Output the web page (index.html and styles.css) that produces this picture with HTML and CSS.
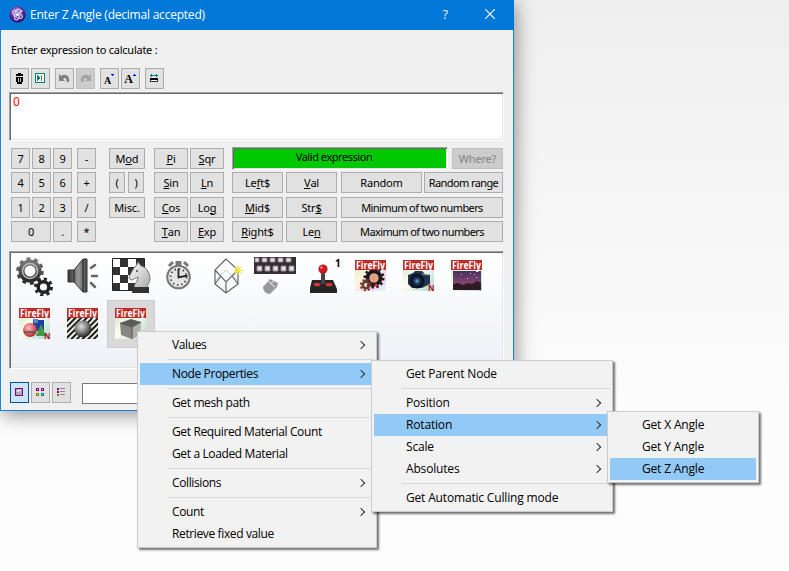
FILE: index.html
```html
<!DOCTYPE html>
<html lang="en">
<head>
<meta charset="utf-8">
<title>Enter Z Angle</title>
<link rel="stylesheet" href="styles.css">
</head>
<body>
<svg class="defs" width="0" height="0" aria-hidden="true">
  <defs>
    <linearGradient id="dark" x1="0" y1="0" x2="0" y2="1"><stop offset="0" stop-color="#777"/><stop offset="1" stop-color="#2b2b2b"/></linearGradient>
    <linearGradient id="cone" x1="0" y1="0" x2="1" y2="0"><stop offset="0" stop-color="#333"/><stop offset=".55" stop-color="#999"/><stop offset="1" stop-color="#444"/></linearGradient>
    <linearGradient id="horse" x1="0" y1="0" x2="1" y2="1"><stop offset="0" stop-color="#fff"/><stop offset="1" stop-color="#aaa"/></linearGradient>
    <linearGradient id="pastel" x1="0" y1="0" x2="1" y2="1"><stop offset="0" stop-color="#c9dfc5"/><stop offset=".45" stop-color="#fffef0"/><stop offset="1" stop-color="#aed8cf"/></linearGradient>
    <linearGradient id="rainbow" x1="0" y1="0" x2="1" y2="1"><stop offset="0" stop-color="#c5f3a8"/><stop offset=".4" stop-color="#fff3e2"/><stop offset=".75" stop-color="#f4d2f4"/><stop offset="1" stop-color="#d5fff0"/></linearGradient>
    <linearGradient id="dusk" x1="0" y1="0" x2="0" y2="1"><stop offset="0" stop-color="#46305e"/><stop offset="1" stop-color="#a5507a"/></linearGradient>
    <radialGradient id="ball" cx=".4" cy=".35" r=".65"><stop offset="0" stop-color="#ddd"/><stop offset=".5" stop-color="#888"/><stop offset="1" stop-color="#222"/></radialGradient>
    <radialGradient id="red" cx=".4" cy=".35" r=".7"><stop offset="0" stop-color="#ffc0c0"/><stop offset="1" stop-color="#b01828"/></radialGradient>
    <radialGradient id="lens"><stop offset="0" stop-color="#7fa6cf"/><stop offset=".5" stop-color="#1c3a66"/><stop offset="1" stop-color="#0a1222"/></radialGradient>
    <radialGradient id="orb" cx=".4" cy=".3" r=".75"><stop offset="0" stop-color="#a98be0"/><stop offset=".5" stop-color="#5a2f9e"/><stop offset="1" stop-color="#24105c"/></radialGradient>
    <pattern id="stripes" width="4" height="4" patternUnits="userSpaceOnUse" patternTransform="rotate(45)"><rect width="4" height="4" fill="#eef3e6"/><rect width="2" height="4" fill="#1b1b1b"/></pattern>
    <g id="banner">
      <rect width="31" height="10" fill="#c22a26"/>
      <text class="brand" x="1" y="9" textLength="29" lengthAdjust="spacingAndGlyphs">FireFly</text>
    </g>
  </defs>
</svg>

<main class="window">
  <header class="titlebar">
    <svg class="app-icon" viewBox="0 0 17 17"><circle cx="8.500" cy="8.500" r="8.200" fill="url(#orb)"/><g fill="none" stroke="#d9cdf5" stroke-width="1.200"><ellipse cx="8.500" cy="8.500" rx="5.500" ry="2.600" transform="rotate(35 8.500 8.500)"/><ellipse cx="8.500" cy="8.500" rx="5.500" ry="2.600" transform="rotate(105 8.500 8.500)"/></g><circle cx="8.500" cy="8.500" r="1.500" fill="#fff"/><circle cx="12.500" cy="5" r="1.200" fill="#e8a0d0"/></svg>
    <h1 class="title">Enter Z Angle (decimal accepted)</h1>
    <span class="help">?</span>
    <svg class="close" viewBox="0 0 10 10"><path d="M.3.3l9.400 9.400M9.700.3L.3 9.700" stroke="#fff" stroke-width="1.200"/></svg>
  </header>

  <div class="body">
    <p class="prompt">Enter expression to calculate :</p>
    <div class="toolbar">
      <button class="btn tool"><svg viewBox="0 0 17 19" class="px"><path d="M7 4h3v1h2v2H5V5h2zM5 8h7v5h-1v2H6v-2H5z" fill="#000"/><path d="M7 9h1v4H7zM9 9h1v4H9z" fill="#bbb"/></svg></button>
      <button class="btn tool"><svg viewBox="0 0 17 19" class="px"><path d="M3 4h10v10H3z" fill="#008080"/><path d="M4 5h8v8H4z" fill="#fff"/><path d="M5 6h1v1h1v1h1v2H7v1H6v1H5z" fill="#008080"/><path d="M9 6h1v6H9z" fill="#808000"/></svg></button>
      <button class="btn tool gap"><svg viewBox="0 0 17 19"><path d="M3 5v7h6l-2-2c2-2 4-1 3.500 3H13c1.500-6-4-9-8-6z" fill="#808080"/></svg></button>
      <button class="btn tool off"><svg viewBox="0 0 17 19"><path d="M14 5v7H8l2-2C8 8 6 9 6.500 13H4C2.500 7 8 4 12 7z" fill="#a3a3a3"/></svg></button>
      <button class="btn tool gap font small">A<svg viewBox="0 0 4 3" class="px mark"><path d="M0 0h3v1H2v1H1V1H0z" fill="#00f"/></svg></button>
      <button class="btn tool font">A<svg viewBox="0 0 4 3" class="px mark"><path d="M1 0h1v1h1v1H0V1h1z" fill="#00f"/></svg></button>
      <button class="btn tool gap"><svg viewBox="0 0 17 19" class="px"><path d="M4 6h8v1H4zM5 5h1v3H5zM10 5h1v3h-1z" fill="#008080"/><path d="M4.500 9.500h7v3h-7z" fill="#fff" stroke="#333"/><path d="M4 9h8v2H4z" fill="#000"/></svg></button>
    </div>

    <div class="editor sunken">0</div>

    <section class="keypad">
      <div class="keys digits">
        <button class="btn">7</button><button class="btn">8</button><button class="btn">9</button><button class="btn op">-</button>
        <button class="btn">4</button><button class="btn">5</button><button class="btn">6</button><button class="btn op">+</button>
        <button class="btn">1</button><button class="btn">2</button><button class="btn">3</button><button class="btn op">/</button>
        <button class="btn zero">0</button><button class="btn">.</button><button class="btn op">*</button>
      </div>
      <div class="keys misc">
        <button class="btn wide">M<u>o</u>d</button>
        <button class="btn">(</button><button class="btn">)</button>
        <button class="btn wide">Misc.</button>
      </div>
      <div class="keys trig">
        <button class="btn"><u>P</u>i</button><button class="btn"><u>S</u>qr</button>
        <button class="btn"><u>S</u>in</button><button class="btn"><u>L</u>n</button>
        <button class="btn"><u>C</u>os</button><button class="btn">Lo<u>g</u></button>
        <button class="btn"><u>T</u>an</button><button class="btn"><u>E</u>xp</button>
      </div>
      <div class="functions">
        <div class="status-row">
          <output class="status sunken">Valid expression</output>
          <button class="btn off where">Where?</button>
        </div>
        <div class="keys text">
          <button class="btn">Le<u>f</u>t$</button><button class="btn second"><u>V</u>al</button><button class="btn third">Random</button><button class="btn fourth long">Random range</button>
          <button class="btn"><u>M</u>id$</button><button class="btn second">Str<u>$</u></button><button class="btn span long">Minimum of two numbers</button>
          <button class="btn"><u>R</u>ight$</button><button class="btn second">Le<u>n</u></button><button class="btn span long">Maximum of two numbers</button>
        </div>
      </div>
    </section>

    <section class="objects sunken">
      <div class="cell"><svg class="big" viewBox="0 0 40 40"><g fill="none" stroke="url(#dark)"><circle cx="15" cy="15" r="8.500" stroke-width="6"/><circle cx="15" cy="15" r="12" stroke-width="3.500" stroke-dasharray="3.770 3.770"/><g stroke="#222"><circle cx="28.500" cy="31" r="5.300" stroke-width="3.500"/><circle cx="28.500" cy="31" r="8" stroke-width="3" stroke-dasharray="3.140 3.140"/></g></g><circle cx="15" cy="15" r="7.500" fill="none" stroke="#bbb" stroke-width="1.500"/></svg></div>
      <div class="cell"><svg class="big" viewBox="0 0 40 40"><path d="M5 14h6L20 3h4v33h-4L11 26H5z" fill="url(#cone)" stroke="#333"/><path d="M11 14v12M20 4v32" stroke="#222" fill="none"/><path d="M28 12l4-3M29 20h5M28 27l4 4" stroke="#666" stroke-width="2.500" stroke-linecap="round"/></svg></div>
      <div class="cell"><svg class="big" viewBox="0 0 40 40"><path d="M1.500 2.500h32v32h-32z" fill="#fff" stroke="#222"/><path d="M9 3h8v8H9zM25 3h8v8h-8zM2 11h7v8H2zM17 11h8v8h-8zM9 19h8v8H9zM2 27h7v7H2zM17 27h8v7h-8z" fill="#333"/><path d="M23 32c0-5 4-6 4-11-3 1-5 3-7 3-2-1-2-3-1-5 2-3 3-7 6-9l2-4 3 4c6 1 9 8 9 13 0 4-3 5-3 9z" fill="url(#horse)" stroke="#777"/><path d="M22 31h16v6H21z" fill="#333"/><circle cx="26" cy="15" r="1" fill="#444"/></svg></div>
      <div class="cell"><svg class="big" viewBox="0 0 40 40"><path d="M10 10l4-4M29 10l-4-4" stroke="#777" stroke-width="3"/><path d="M16.500 5h6v4h-6z" fill="#777"/><circle cx="19.500" cy="21" r="11.300" fill="#e5e5e5" stroke="#777" stroke-width="2"/><circle cx="19.500" cy="21" r="8" fill="none" stroke="#333" stroke-width="1.700" stroke-dasharray="1.400 2.790"/><path d="M19.500 12.500v9l9-2" fill="none" stroke="#222" stroke-width="1.800"/></svg></div>
      <div class="cell"><svg class="big" viewBox="0 0 40 40"><g fill="none"><path d="M19 14L8 25M19 14l12 11" stroke="#ccc"/><path d="M19 3L8 14v14l11 9 12-9V14zM8 14l11 12 12-12M19 26v11M8 28l6-8M31 28l-6-8" stroke="#666" stroke-width="1.200"/><path d="M31 10v9M27 14.500h9M28 11l6 6M34 11l-6 6" stroke="#f2e635" stroke-width="1.200"/></g></svg></div>
      <div class="cell"><svg class="keyboard" viewBox="0 0 44 40"><path d="M1 1h42v17H1z" fill="#332f33"/><path d="M2 2h4v4H2zM9 2h5v4H9zM17 2h5v4h-5zM25 2h5v4h-5zM33 2h5v4h-5zM4 10h5v5H4zM12 10h5v5h-5zM20 10h5v5h-5zM28 10h5v5h-5zM36 10h5v5h-5z" fill="#eadfe2" stroke="#8c8387"/><path d="M10 31l7-8 8 4-1 4-7 7c-4 0-7-3-7-7z" fill="#999"/><path d="M15 25l7 6M18 28l3-4" stroke="#eee" fill="none"/></svg></div>
      <div class="cell"><svg class="big" viewBox="0 0 40 40"><path d="M9 24h21l4 9v4H7v-5z" fill="#252525"/><ellipse cx="14" cy="28.500" rx="3.500" ry="1.800" fill="#d33"/><ellipse cx="26" cy="28.500" rx="3.500" ry="1.800" fill="#d33"/><path d="M18 15h4v13h-4z" fill="#444"/><circle cx="20" cy="13" r="4.600" fill="#c91820"/><circle cx="18.500" cy="11.500" r="1.300" fill="#f88"/><text class="num" x="32" y="10.500">1</text></svg></div>
      <div class="cell"><svg class="fly" viewBox="0 0 32 32"><path d="M0 0h31v31H0z" fill="url(#rainbow)"/><g fill="none" stroke="#21191b"><circle cx="19" cy="18" r="6.500" stroke-width="4"/><circle cx="19" cy="18" r="9.300" stroke-width="2.500" stroke-dasharray="2.430 2.430"/><g stroke="#713a28"><circle cx="11" cy="25" r="3.200" stroke-width="2.500"/><circle cx="11" cy="25" r="5.300" stroke-width="2" stroke-dasharray="2.080 2.080"/></g></g><circle cx="19" cy="18" r="4" fill="#e1a179"/><circle cx="21" cy="25" r="1.500" fill="#e33"/><use href="#banner"/></svg></div>
      <div class="cell"><svg class="fly" viewBox="0 0 32 32"><path d="M0 0h31v31H0z" fill="url(#pastel)"/><path d="M5 15l5-2 2-2h7l3 3 5 1v9l-8 4H9l-4-4z" fill="#26344e"/><circle cx="14" cy="21" r="7.500" fill="#0d1626"/><circle cx="14" cy="21" r="5.500" fill="url(#lens)"/><path d="M19 14l6 1" stroke="#8aa" /><text class="letter" x="25" y="31">N</text><use href="#banner"/></svg></div>
      <div class="cell"><svg class="fly" viewBox="0 0 32 32"><path d="M0 0h31v31H0z" fill="url(#pastel)"/><path d="M2 11h28v19H2z" fill="url(#dusk)"/><path d="M2 24l5-1 5 2 5-2 4 1 5-3 4 2v7H2z" fill="#2e1a25"/><path d="M10 14h1v1h-1zM19 13h1v1h-1zM23 14h1v1h-1zM16 18h1v1h-1zM25 17h1v1h-1z" fill="#dcc"/><use href="#banner"/></svg></div>
      <div class="cell"><svg class="fly" viewBox="0 0 32 32"><path d="M0 0h31v31H0z" fill="url(#pastel)"/><path d="M14 12h11v11H14z" fill="#1f3f9c"/><path d="M14 11h5v4h-4z" fill="#5d84d8"/><path d="M17 28l5-12 5 12z" fill="#3c9c48"/><circle cx="11" cy="22" r="7" fill="url(#red)"/><path d="M5 24h12" stroke="#555" stroke-width="1.500"/><text class="letter" x="25" y="31">N</text><use href="#banner"/></svg></div>
      <div class="cell"><svg class="fly" viewBox="0 0 32 32"><path d="M0 0h31v31H0z" fill="url(#stripes)"/><circle cx="16" cy="21" r="8.500" fill="url(#ball)"/><use href="#banner"/></svg></div>
      <div class="cell selected"><svg class="fly" viewBox="0 0 32 32"><path d="M0 0h31v31H0z" fill="url(#pastel)"/><path d="M5 15l11-4 10 3-9 5z" fill="#5a5c58"/><path d="M5 15l12 4v12L6 27z" fill="#858780"/><path d="M17 19l9-5-1 13-8 4z" fill="#acaea6"/><path d="M17 19v12M5 15l12 4 9-5" stroke="#555" fill="none"/><use href="#banner"/></svg></div>
    </section>

    <footer class="views">
      <button class="btn tool on"><svg viewBox="0 0 17 19" class="px"><path d="M4.500 5.500h7v7h-7z" fill="#aaa" stroke="#800080"/><path d="M6 7h4v1H8v1H6z" fill="#eee"/></svg></button>
      <button class="btn tool"><svg viewBox="0 0 17 19" class="px"><g fill="none"><path d="M4.500 5.500h2v2h-2zM9.500 5.500h2v2h-2z" stroke="#800080"/><path d="M4.500 10.500h2v2h-2z" stroke="#808000"/><path d="M9.500 10.500h2v2h-2z" stroke="#008080"/></g></svg></button>
      <button class="btn tool"><svg viewBox="0 0 17 19" class="px"><path d="M4 5h2v2H4zM4 8h2v2H4z" fill="#800080"/><path d="M4 11h2v2H4z" fill="#808000"/><path d="M7 5h5v1H7zM7 8h5v1H7zM7 11h5v1H7z" fill="#888"/></svg></button>
      <input class="search" type="text" aria-label="Filter">
    </footer>
  </div>
</main>

<nav class="menu root">
  <div class="item more">Values</div>
  <hr>
  <div class="item more active">Node Properties</div>
  <hr>
  <div class="item">Get mesh path</div>
  <hr>
  <div class="item">Get Required Material Count</div>
  <div class="item">Get a Loaded Material</div>
  <hr>
  <div class="item more">Collisions</div>
  <hr>
  <div class="item more">Count</div>
  <div class="item">Retrieve fixed value</div>
</nav>
<nav class="menu node">
  <div class="item">Get Parent Node</div>
  <hr>
  <div class="item more">Position</div>
  <div class="item more active">Rotation</div>
  <div class="item more">Scale</div>
  <div class="item more">Absolutes</div>
  <hr>
  <div class="item">Get Automatic Culling mode</div>
</nav>
<nav class="menu rotation">
  <div class="item">Get X Angle</div>
  <div class="item">Get Y Angle</div>
  <div class="item active">Get Z Angle</div>
</nav>
</body>
</html>
```
FILE: styles.css
```css
* { box-sizing: border-box; }

body {
  margin: 0;
  width: 789px;
  height: 571px;
  overflow: hidden;
  position: relative;
  background: linear-gradient(#efefef 0, #f3f3f3 120px, #f8f8f8 260px, #fcfcfc 400px, #fdfdfd 100%);
  font-family: "Noto Sans", "Open Sans", sans-serif;
  font-size: 11px;
  color: #000;
}

.defs { position: absolute; }

.window {
  width: 514px;
  height: 411px;
  border: 1px solid #1883d7;
  border-top: 0;
  background: #f0f0f0;
  box-shadow: 2px 4px 18px rgba(0, 0, 0, .42);
}

.titlebar {
  display: flex;
  align-items: center;
  height: 30px;
  margin: 0 -1px;
  padding: 0 19px 2px 9px;
  background: #0078d7;
  color: #fff;
}
.app-icon { width: 17px; height: 17px; }
.title {
  flex: 1;
  margin: 1px 0 0 4px;
  font: 400 12px/18px "Open Sans", sans-serif;
  letter-spacing: -.22px;
}
.help { margin: 1px 37px 0 0; font: 12px/18px "Open Sans", sans-serif; }
.close { width: 10px; height: 10px; }

.body { padding: 0 9px 0 8px; }

.prompt {
  height: 38px;
  margin: 0;
  padding: 12px 0 0 2px;
  line-height: 16px;
  letter-spacing: -.25px;
}

.btn {
  display: flex;
  align-items: center;
  justify-content: center;
  height: 21px;
  padding: 0 0 1px;
  border: 1px solid #adadad;
  background: #e1e1e1;
  color: #000;
  font: 11px/15px "Noto Sans", sans-serif;
  letter-spacing: -.2px;
  white-space: nowrap;
}
.btn u { text-underline-offset: 1px; text-decoration-thickness: 1px; }
.btn.off { border-color: #bfbfbf; background: #ccc; color: #838383; }
.btn.on { border-color: #005499; background: #cce4f7; }

.toolbar { display: flex; gap: 2px; padding-left: 1px; }
.tool { width: 19px; padding: 0; }
.tool svg { width: 17px; height: 19px; flex: none; }
.tool.gap { margin-left: 3px; }
.tool.font { font: bold 12px/19px "Liberation Serif", serif; padding-top: 2px; }
.tool.font.small { font-size: 10px; padding-top: 3px; }
.tool .mark { width: 4px; height: 3px; align-self: flex-start; margin-top: 3px; }
.tool.small .mark { margin-top: 2px; }
.px { shape-rendering: crispEdges; }

.sunken {
  border: 1px solid;
  border-color: #a0a0a0 #fff #fff #a0a0a0;
  box-shadow: inset 1px 1px #696969, inset -1px -1px #e3e3e3;
}

.editor {
  width: 495px;
  height: 49px;
  margin-top: 3px;
  padding: 1px 3px;
  background: #fff;
  color: #f00;
  font-size: 12px;
  line-height: 16px;
}

.keypad { display: flex; width: 494px; margin-top: 6px; padding-left: 2px; }
.keys { display: grid; grid-template-rows: 24px 25px 24px 21px; height: 94px; margin-top: 1px; }
.digits { grid-template-columns: 19px 19px 19px 22px; column-gap: 2px; width: 85px; }
.digits .op { margin-left: 3px; }
.zero { grid-column: span 2; }
.misc { grid-template-columns: 16px 16px; column-gap: 3px; width: 36px; margin-left: 13px; }
.misc .wide { grid-column: span 2; width: 36px; }
.trig { grid-template-columns: 34px 34px; column-gap: 2px; margin-left: 9px; }
.functions { width: 271px; margin-left: 8px; }
.status-row { display: flex; justify-content: space-between; height: 25px; }
.status {
  width: 216px;
  height: 23px;
  background: #00c800;
  text-align: center;
  line-height: 18px;
  padding-right: 12px;
  letter-spacing: -.45px;
}
.where { width: 51px; margin-top: 1px; }
.text {
  grid-template-columns: 51px 54px 85px 81px;
  grid-template-rows: 25px 24px 21px;
  width: 271px;
  height: 70px;
  margin-top: 0;
}
.text .second { margin-left: 3px; }
.text .third { margin-left: 4px; }
.text .fourth { margin-left: 2px; }
.text .span { grid-column: span 2; margin-left: 4px; }
.text .long { letter-spacing: -.6px; }

.objects {
  display: flex;
  flex-wrap: wrap;
  align-content: flex-start;
  width: 495px;
  height: 118px;
  margin-top: 9px;
  padding: 0 10px 0 1px;
  background: linear-gradient(#fff, #edf1f6);
}
.cell { display: flex; align-items: center; justify-content: center; width: 48px; height: 48px; }
.cell.selected { border: 1px solid #ccc; background: #d9d9d9; }
.big { width: 40px; height: 40px; }
.keyboard { width: 44px; height: 40px; }
.fly { width: 32px; height: 32px; }
.brand { font: bold 10px "Open Sans", sans-serif; fill: #fff; }
.num { font: bold 10px "Noto Sans", sans-serif; }
.letter { font: bold 8px "Noto Sans", sans-serif; fill: #b01010; }

.views { display: flex; gap: 2px; margin-top: 13px; padding-left: 1px; }
.search { width: 220px; height: 21px; margin: 1px 0 0 9px; border: 1px solid #7a7a7a; background: #fff; }

.menu {
  position: absolute;
  padding: 2px;
  border: 1px solid #ccc;
  background: #f2f2f2;
  box-shadow: 2px 2px 2px rgba(0, 0, 0, .55);
  font: 12px/22px "Open Sans", sans-serif;
  letter-spacing: -.17px;
}
.root { left: 137px; top: 331px; width: 240px; height: 217px; letter-spacing: -.37px; }
.node { left: 371px; top: 360px; width: 242px; height: 152px; }
.rotation { left: 607px; top: 411px; width: 152px; height: 72px; }

.item { position: relative; height: 22px; padding-left: 32px; white-space: nowrap; }
.item.active { background: #91c9f7; }
.item.more::after {
  content: "";
  position: absolute;
  right: 10px;
  top: 8px;
  width: 5px;
  height: 5px;
  border: solid #333;
  border-width: 1px 1px 0 0;
  transform: rotate(45deg);
}
.menu hr { height: 1px; margin: 3px 0 3px 28px; border: 0; background: #d7d7d7; }
```
